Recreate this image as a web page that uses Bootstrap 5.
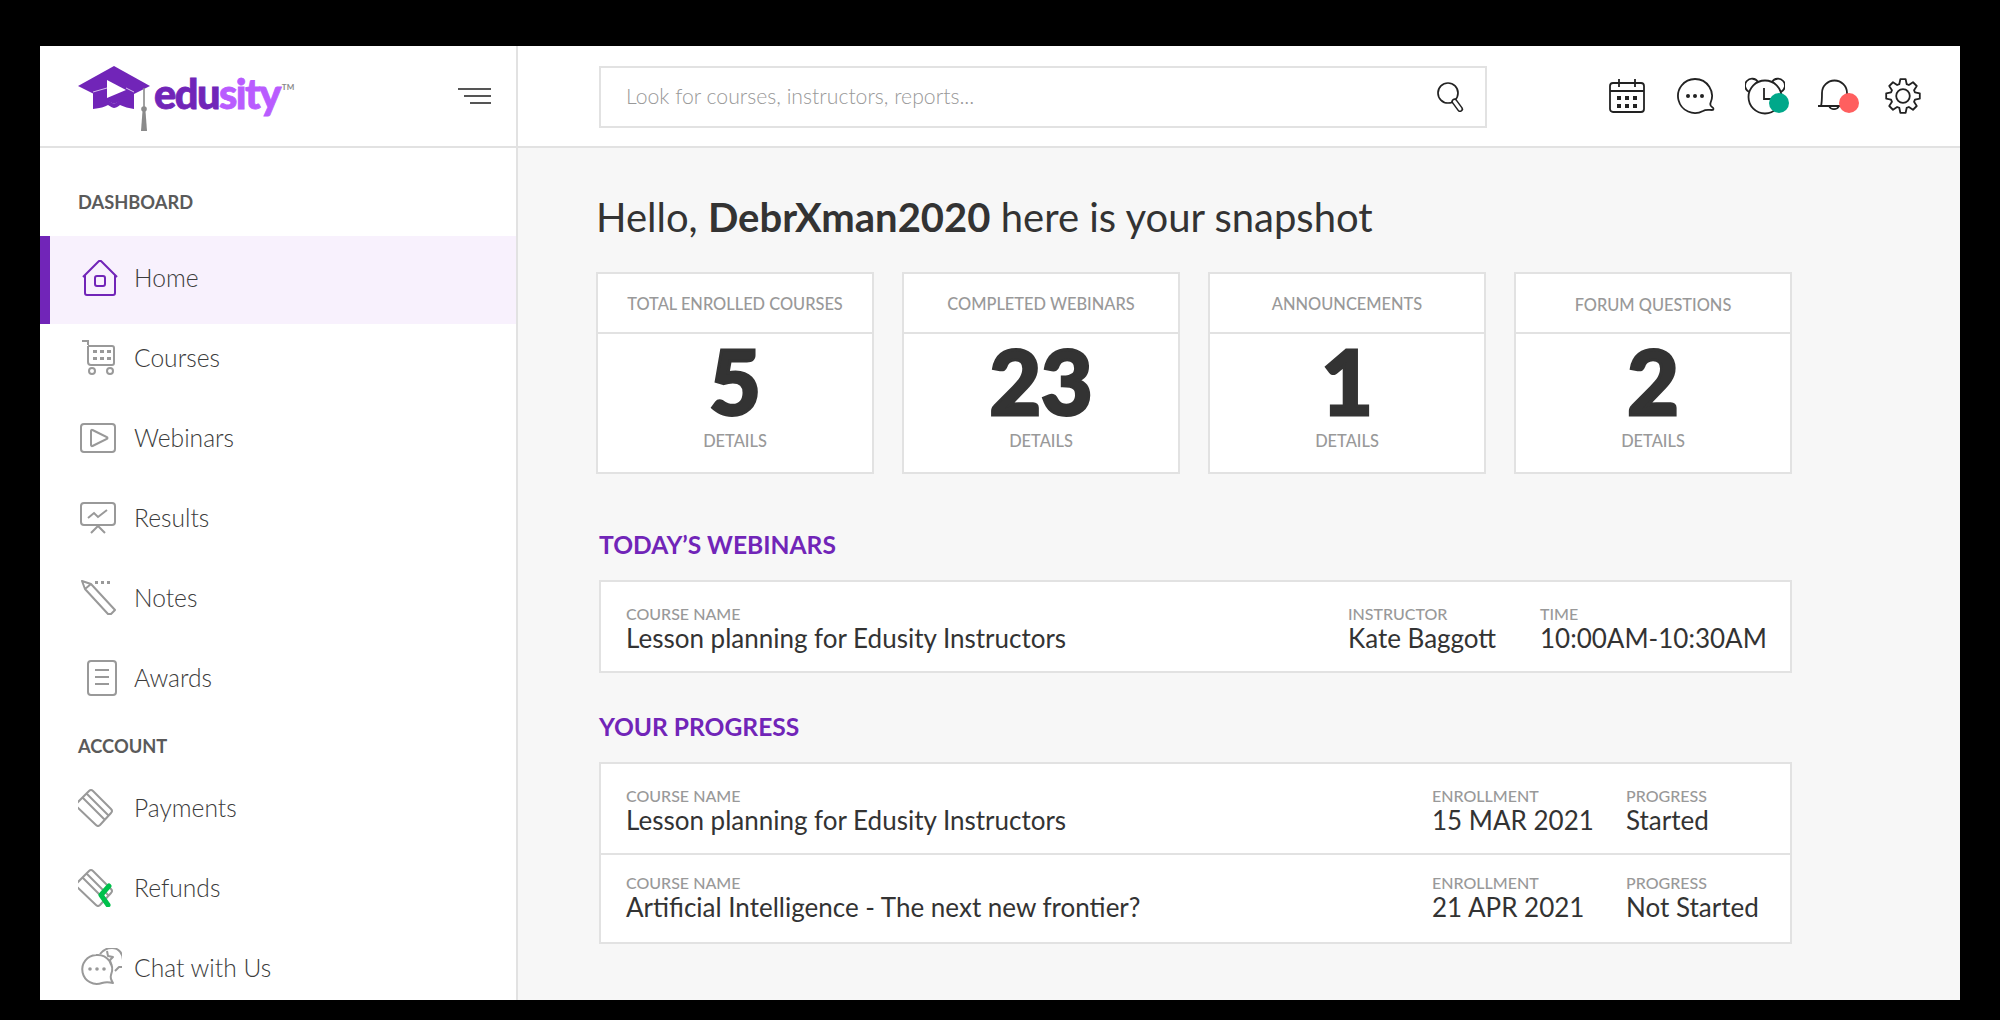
<!DOCTYPE html>
<html lang="en">
<head>
<meta charset="utf-8">
<title>Edusity</title>
<link rel="stylesheet" href="https://cdn.jsdelivr.net/npm/bootstrap@5.3.0/dist/css/bootstrap.min.css">
<style>
html,body{height:1020px;overflow:hidden}
body{background:#000;padding:46px 40px 20px;font-family:"Lato","Liberation Sans",sans-serif;color:#333}
.frame{background:#f7f7f7;height:954px;overflow:hidden;display:flex;flex-direction:column}
.topbar{height:102px;flex:none;background:#fff;border-bottom:2px solid #e2e2e2;display:flex}
.brandcell{width:478px;flex:none;border-right:2px solid #e2e2e2;display:flex;align-items:center;justify-content:space-between;padding:0 25px 0 38px}
.logo-group{margin-top:8px}
.logo-word{font-weight:900;font-size:41.500px;letter-spacing:-1.5px;line-height:1;color:#7125b8;margin-left:2px;margin-bottom:13px;-webkit-text-stroke:.8px currentColor}
.logo-word span{color:#b95cff}
.logo-word sup{font-size:8px;letter-spacing:0;color:#888;font-weight:700;top:-19px;margin-left:2px;position:relative;vertical-align:baseline;-webkit-text-stroke:0}
.searchbox{width:888px;height:62px;margin-left:81px;margin-top:20px;border:2px solid #e2e2e2;display:flex;align-items:center;justify-content:space-between;padding:0 20px 0 25px;color:#999;font-size:21.2px;font-weight:300}
.topicons{margin-left:auto;display:flex;align-items:center;padding-right:23px}
.topicons>div{position:relative;width:69px;display:flex;justify-content:center}
.dot{position:absolute;width:20px;height:20px;border-radius:50%;right:10px;bottom:2px}
.body-row{flex:1;display:flex;min-height:0}
.sidebar{width:478px;flex:none;background:#fff;border-right:2px solid #e2e2e2;overflow:hidden}
.side-head{font-size:18.300px;font-weight:700;color:#5a5a5a;padding-left:38px;line-height:22px}
.side-item{height:88px;display:flex;align-items:center;padding:0 0 4px 38px;font-size:24.6px;font-weight:300;color:#3c3c3c}
.side-item svg{width:44px;flex:none;margin-right:12px}
.side-item.on{background:#f8f1fd;border-left:10px solid #7125b8;padding-left:28px}
.side-stack{margin-top:-6px}
.side-stack .side-item{height:80px;padding-bottom:0}
.mainpane{flex:1;padding:0 0 0 81px;min-width:0}
.hello{font-size:40px;font-weight:400;line-height:46px;margin:46px 0 0 -3px;color:#333}
.hello b{font-weight:700}
.stat-row{display:flex;gap:28px;margin:32px 0 0 -3px;width:1197px}
.stat{width:278px;height:202px;background:#fff;border:2px solid #e2e2e2;text-align:center}
.stat-top{height:60px;border-bottom:2px solid #e2e2e2;font-size:16.4px;color:#999;display:flex;align-items:center;justify-content:center;font-weight:500;padding-top:2px}
.stat-top.lowered{padding-top:5px}
.stat-num{font-size:89px;font-weight:900;color:#333;line-height:76px;margin-top:9px;-webkit-text-stroke:3px #333}
.stat-foot{font-size:16.4px;color:#999;line-height:20px;margin-top:12px;font-weight:500}
.sec-title{font-size:24.6px;font-weight:700;color:#7125b8;line-height:30px;margin:0}
.sec-a{margin-top:56px}
.sec-b{margin-top:39px}
.tablebox{width:1193px;background:#fff;border:2px solid #e2e2e2;margin-top:20px}
.tablerow{height:89px;display:flex;padding-left:25px;padding-top:22.5px}
.tablerow + .tablerow{border-top:2px solid #e2e2e2;height:89px;padding-top:19px}
.cell-lbl{font-size:16px;line-height:18px;color:#999;font-weight:500;display:block}
.cell-val{font-size:26px;line-height:30px;color:#333;font-weight:400;display:block;white-space:nowrap}
.grow{flex:1}
.w-inst{width:192px}.w-time{width:250px}.w-enr{width:194px}.w-prog{width:164px}
</style>
</head>
<body>
<div class="frame">
  <div class="topbar">
    <div class="brandcell">
      <div class="d-flex align-items-center logo-group">
        <svg width="74" height="68" viewBox="0 0 74 68"><path fill="#7125b8" d="M0 20 36 0 72 20 36 38Z"/><path fill="#7125b8" d="M15 25v18c7-1 12-2 15-4 3 2 5 3 6 3s4-1 6-3c4 2 9 3 14 4V25L36 38Z"/><path fill="#fff" d="M29 14 48 24 29 32Z"/><path fill="none" stroke="#fff" stroke-width=".7" d="M15 26 29 22M48 22 56 26"/><path fill="none" stroke="#8a8a8a" stroke-width="1.6" d="M66 22V42"/><circle cx="66" cy="43" r="2.800" fill="#8a8a8a"/><path fill="#8a8a8a" d="M64.500 45h3l1.500 20h-6Z"/></svg>
        <div class="logo-word">edu<span>sity</span><sup>TM</sup></div>
      </div>
      <svg width="33" height="16" viewBox="0 0 33 16"><path stroke="#555" stroke-width="2" d="M0 1h33M6 8h27M12 15h21"/></svg>
    </div>
    <div class="searchbox">
      <span>Look for courses, instructors, reports...</span>
      <svg width="28" height="30" viewBox="0 0 28 30" fill="none"><circle cx="11" cy="11" r="10" stroke="#222" stroke-width="1.7"/><path d="M17.500 19.500 23 27" stroke="#222" stroke-width="6" stroke-linecap="round"/><path d="M17.500 19.500 23 27" stroke="#fff" stroke-width="3" stroke-linecap="round"/></svg>
    </div>
    <div class="topicons">
      <div><svg width="36" height="36" viewBox="0 0 36 36" fill="none" stroke="#222" stroke-width="1.8"><rect x="1" y="5" width="34" height="29" rx="3"/><path d="M1 13h34M10 1v8M26 1v8"/><g fill="#222" stroke="none"><rect x="8" y="18" width="4" height="4"/><rect x="16" y="18" width="4" height="4"/><rect x="24" y="18" width="4" height="4"/><rect x="8" y="26" width="4" height="4"/><rect x="16" y="26" width="4" height="4"/><rect x="24" y="26" width="4" height="4"/></g></svg></div>
      <div><svg width="38" height="36" viewBox="0 0 38 36" fill="none" stroke="#222" stroke-width="1.8"><path d="M18 1a17 17 0 1 0 8 32c3-2 6-1 9-1 2 0 2-2 0-3-2-1-2-2-1.500-4A17 17 0 0 0 18 1Z"/><g fill="#222" stroke="none"><circle cx="11" cy="18" r="2"/><circle cx="18" cy="18" r="2"/><circle cx="25" cy="18" r="2"/></g></svg></div>
      <div><svg width="40" height="38" viewBox="0 0 40 38" fill="none" stroke="#222" stroke-width="1.8"><circle cx="20" cy="20" r="16.500"/><path d="M19 11v11h9M4 15a7 7 0 1 1 9-10M36 15a7 7 0 1 0-9-10"/></svg><span class="dot" style="background:#00a88a"></span></div>
      <div><svg width="38" height="38" viewBox="0 0 38 38" fill="none" stroke="#222" stroke-width="1.8"><path d="M3 29h3c1-4 1-7 1-13a12.500 12.500 0 0 1 25 0c0 6 0 9 1 13h2Z"/><path d="M14 29a5.500 5.500 0 0 0 10 0"/></svg><span class="dot" style="right:9.500px;background:#ff5f5f"></span></div>
      <div><svg width="36" height="36" viewBox="0 0 36 36" fill="none" stroke="#222" stroke-width="1.8" stroke-linejoin="round"><circle cx="18" cy="18" r="6.800"/><path d="M14.35 6.05 15.34 1.2H20.66L21.65 6.05 23.87 6.97 28 4.24 31.76 8 29.03 12.13 29.95 14.35 34.8 15.34V20.66L29.95 21.65 29.03 23.87 31.76 28 28 31.76 23.87 29.03 21.65 29.95 20.66 34.8H15.34L14.35 29.95 12.13 29.03 8 31.76 4.24 28 6.97 23.87 6.05 21.65 1.2 20.66V15.34L6.05 14.35 6.97 12.13 4.24 8 8 4.24 12.13 6.97Z"/></svg></div>
    </div>
  </div>
  <div class="body-row">
    <aside class="sidebar">
      <div class="side-head" style="margin-top:43px;margin-bottom:23px">DASHBOARD</div>
      <div class="side-item on"><svg height="36" viewBox="0 0 44 36" fill="none" stroke="#7125b8" stroke-width="2" stroke-linejoin="round"><path d="M5 17 21 1h2l16 16M7 15v18a2 2 0 0 0 2 2h26a2 2 0 0 0 2-2V15"/><rect x="17" y="16" width="10" height="10" rx="2"/></svg><span>Home</span></div>
      <div class="side-stack">
        <div class="side-item"><svg height="36" viewBox="0 0 44 36" fill="none" stroke="#999" stroke-width="2"><path d="M4 1h6v4M10 6v16a3 3 0 0 0 3 3h21a2 2 0 0 0 2-2V8a2 2 0 0 0-2-2H10"/><circle cx="14" cy="31" r="3"/><circle cx="32" cy="31" r="3"/><g fill="#999" stroke="none"><rect x="15" y="10" width="4" height="3"/><rect x="22" y="10" width="4" height="3"/><rect x="29" y="10" width="4" height="3"/><rect x="15" y="17" width="4" height="3"/><rect x="22" y="17" width="4" height="3"/><rect x="29" y="17" width="4" height="3"/></g></svg><span>Courses</span></div>
        <div class="side-item"><svg height="30" viewBox="0 0 44 30" fill="none" stroke="#999" stroke-width="2"><rect x="3" y="1" width="34" height="28" rx="3"/><path d="M13 8v14a1 1 0 0 0 1.500 1l14-7a1 1 0 0 0 0-2L14.500 7A1 1 0 0 0 13 8Z"/></svg><span>Webinars</span></div>
        <div class="side-item"><svg height="32" viewBox="0 0 44 32" fill="none" stroke="#999" stroke-width="2"><rect x="3" y="1" width="34" height="22" rx="3"/><path d="M10 16l6-5 4 4 9-7M13 31l7-7 7 7"/></svg><span>Results</span></div>
        <div class="side-item"><svg height="36" viewBox="0 0 44 36" fill="none" stroke="#999" stroke-width="2" stroke-linejoin="round"><path d="M4 1l9 3 24 26-4 4-3 0L7 9ZM7 9l6-5"/><g fill="#999" stroke="none"><rect x="17" y="1" width="3" height="3"/><rect x="23" y="1" width="3" height="3"/><rect x="29" y="1" width="3" height="3"/></g></svg><span>Notes</span></div>
        <div class="side-item"><svg height="36" viewBox="0 0 44 36" fill="none" stroke="#999" stroke-width="2"><rect x="10" y="1" width="28" height="34" rx="3"/><path d="M17 10h14M17 17h14M17 24h14"/></svg><span>Awards</span></div>
      </div>
      <div class="side-head" style="margin-top:17px;margin-bottom:11px">ACCOUNT</div>
      <div class="side-stack" style="margin-top:0">
        <div class="side-item"><svg height="38" viewBox="3 0 44 38" fill="none" stroke="#999" stroke-width="2" stroke-linejoin="round"><path d="M2 14 14 2Q16 0 18 2L36 20Q38 22 36 24L25 36Q23 38 21 36L2 18Q0 16 2 14ZM12 5 34 27M8 9 30 31"/></svg><span>Payments</span></div>
        <div class="side-item"><svg height="38" viewBox="3 0 44 38" fill="none" stroke="#999" stroke-width="2" stroke-linejoin="round"><path d="M2 14 14 2Q16 0 18 2L36 20Q38 22 36 24L25 36Q23 38 21 36L2 18Q0 16 2 14ZM12 5 34 27M8 9 30 31"/><path d="M34 17l-8 9 7 10" stroke="#00c04b" stroke-width="5" stroke-linecap="round"/></svg><span>Refunds</span></div>
        <div class="side-item"><svg height="40" viewBox="-3 0 44 40" fill="none" stroke="#999" stroke-width="2" stroke-linejoin="round"><path d="M15 7a14.500 14.500 0 1 0 6 28c3-1 7-1 11 0-2-3-3-5-2-8a14.500 14.500 0 0 0-15-20Z"/><path d="M19 6C22 2 27 0 31 0 38 0 42 6 42 12c0 3 0 5 1 7l-5 0-4 4"/><path d="M26 3l1 5 5 1-3 3 1 5"/><g fill="#999" stroke="none"><circle cx="9" cy="21" r="1.800"/><circle cx="16" cy="21" r="1.800"/><circle cx="23" cy="21" r="1.800"/></g></svg><span>Chat with Us</span></div>
      </div>
    </aside>
    <main class="mainpane">
      <h1 class="hello">Hello, <b>DebrXman2020</b> here is your snapshot</h1>
      <div class="stat-row">
        <div class="stat"><div class="stat-top">TOTAL ENROLLED COURSES</div><div class="stat-num">5</div><div class="stat-foot">DETAILS</div></div>
        <div class="stat"><div class="stat-top">COMPLETED WEBINARS</div><div class="stat-num">23</div><div class="stat-foot">DETAILS</div></div>
        <div class="stat"><div class="stat-top">ANNOUNCEMENTS</div><div class="stat-num">1</div><div class="stat-foot">DETAILS</div></div>
        <div class="stat"><div class="stat-top lowered">FORUM QUESTIONS</div><div class="stat-num">2</div><div class="stat-foot">DETAILS</div></div>
      </div>
      <h2 class="sec-title sec-a">TODAY’S WEBINARS</h2>
      <div class="tablebox">
        <div class="tablerow">
          <div class="grow"><span class="cell-lbl">COURSE NAME</span><span class="cell-val">Lesson planning for Edusity Instructors</span></div>
          <div class="w-inst"><span class="cell-lbl">INSTRUCTOR</span><span class="cell-val">Kate Baggott</span></div>
          <div class="w-time"><span class="cell-lbl">TIME</span><span class="cell-val">10:00AM-10:30AM</span></div>
        </div>
      </div>
      <h2 class="sec-title sec-b">YOUR PROGRESS</h2>
      <div class="tablebox">
        <div class="tablerow">
          <div class="grow"><span class="cell-lbl">COURSE NAME</span><span class="cell-val">Lesson planning for Edusity Instructors</span></div>
          <div class="w-enr"><span class="cell-lbl">ENROLLMENT</span><span class="cell-val">15 MAR 2021</span></div>
          <div class="w-prog"><span class="cell-lbl">PROGRESS</span><span class="cell-val">Started</span></div>
        </div>
        <div class="tablerow">
          <div class="grow"><span class="cell-lbl">COURSE NAME</span><span class="cell-val">Artificial Intelligence - The next new frontier?</span></div>
          <div class="w-enr"><span class="cell-lbl">ENROLLMENT</span><span class="cell-val">21 APR 2021</span></div>
          <div class="w-prog"><span class="cell-lbl">PROGRESS</span><span class="cell-val">Not Started</span></div>
        </div>
      </div>
    </main>
  </div>
</div>
<script src="https://cdn.jsdelivr.net/npm/bootstrap@5.3.0/dist/js/bootstrap.bundle.min.js"></script>
</body>
</html>
